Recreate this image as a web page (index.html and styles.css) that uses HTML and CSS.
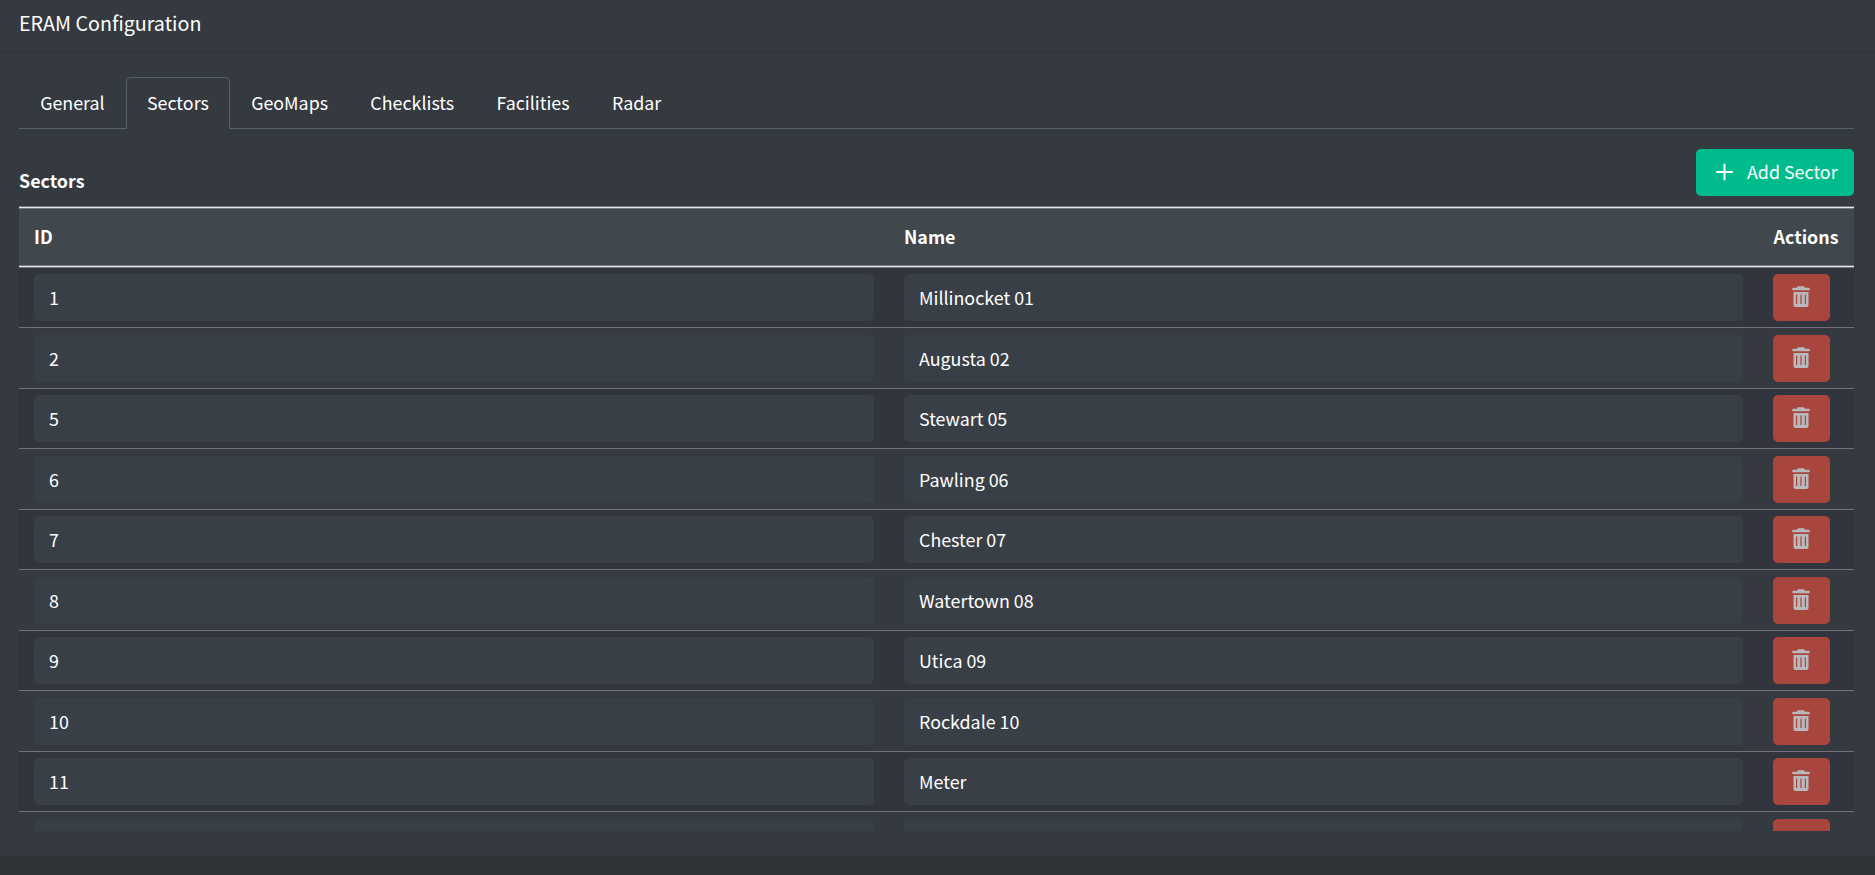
FILE: index.html
```html
<!DOCTYPE html>
<html lang="en">
<head>
<meta charset="utf-8">
<title>ERAM Configuration</title>
<link rel="stylesheet" href="styles.css">
</head>
<body>
<svg class="defs" aria-hidden="true">
  <symbol id="trash" viewBox="0 0 18 22">
    <path fill-rule="evenodd" d="M6 .3h6l1 1.400h4q.8 0 .8 1.300t-.8 1.300H1q-.8 0-.8-1.300t.8-1.300h4zM1.500 6h15v13q0 2-2 2h-11q-2 0-2-2zM4 8.500v9.500h1.200V8.500zM8.400 8.500v9.500h1.200V8.500zM12.800 8.500v9.500H14V8.500z"/>
  </symbol>
</svg>
<main class="window">
  <header class="window-header">ERAM Configuration</header>
  <section class="content">
    <nav class="tabs">
      <a class="tab">General</a>
      <a class="tab active">Sectors</a>
      <a class="tab">GeoMaps</a>
      <a class="tab">Checklists</a>
      <a class="tab">Facilities</a>
      <a class="tab">Radar</a>
    </nav>
    <div class="toolbar">
      <h2 class="title">Sectors</h2>
      <button class="add"><svg class="plus" viewBox="0 0 18 18"><path d="M9 1v16M1 9h16"/></svg><span class="add-label">Add Sector</span></button>
    </div>
    <div class="table">
      <div class="row head"><span>ID</span><span>Name</span><span class="actions">Actions</span></div>
      <div class="row"><span class="field">1</span><span class="field">Millinocket 01</span><button class="delete"><svg class="icon"><use href="#trash"/></svg></button></div>
      <div class="row"><span class="field">2</span><span class="field">Augusta 02</span><button class="delete"><svg class="icon"><use href="#trash"/></svg></button></div>
      <div class="row"><span class="field">5</span><span class="field">Stewart 05</span><button class="delete"><svg class="icon"><use href="#trash"/></svg></button></div>
      <div class="row"><span class="field">6</span><span class="field">Pawling 06</span><button class="delete"><svg class="icon"><use href="#trash"/></svg></button></div>
      <div class="row"><span class="field">7</span><span class="field">Chester 07</span><button class="delete"><svg class="icon"><use href="#trash"/></svg></button></div>
      <div class="row"><span class="field">8</span><span class="field">Watertown 08</span><button class="delete"><svg class="icon"><use href="#trash"/></svg></button></div>
      <div class="row"><span class="field">9</span><span class="field">Utica 09</span><button class="delete"><svg class="icon"><use href="#trash"/></svg></button></div>
      <div class="row"><span class="field">10</span><span class="field">Rockdale 10</span><button class="delete"><svg class="icon"><use href="#trash"/></svg></button></div>
      <div class="row"><span class="field">11</span><span class="field">Meter</span><button class="delete"><svg class="icon"><use href="#trash"/></svg></button></div>
      <div class="row"><span class="field"></span><span class="field"></span><button class="delete"></button></div>
    </div>
  </section>
  <footer class="footer"></footer>
</main>
</body>
</html>
```
FILE: styles.css
```css
*, *::after { box-sizing: border-box; }

body {
  margin: 0;
  background: #353940;
  color: #fff;
  font-family: "Noto Sans CJK SC", "Noto Sans", sans-serif;
  font-size: 17.85px;
  line-height: 28px;
}

button { font: inherit; color: inherit; border: 0; padding: 0; }

.defs { display: block; width: 0; height: 0; }

.window {
  display: flex;
  flex-direction: column;
  height: 875px;
  overflow: hidden;
}

.window-header {
  flex: none;
  height: 52px;
  padding: 9px 19px 0;
  border-bottom: 1px solid #2e3237;
  font-size: 19.7px;
}

.content {
  flex: none;
  height: 779px;
  padding: 25px 21px 0 19px;
  overflow: hidden;
}

.tabs {
  display: flex;
  height: 52px;
  border-bottom: 1px solid #56616a;
}

.tab {
  height: 52px;
  padding: 10px 20.150px 0;
  border: 1px solid transparent;
  border-bottom: 0;
}

.tab.active {
  background: #353940;
  border-color: #56616a;
  border-radius: 5px 5px 0 0;
}

.toolbar {
  display: flex;
  justify-content: space-between;
  height: 77px;
  padding-top: 20px;
}

.title { margin: 17px 0 0; font-size: inherit; font-weight: 700; }

.add {
  display: flex;
  align-items: center;
  gap: 14px;
  width: 158px;
  height: 47px;
  padding: 0 0 1px 20px;
  border-radius: 5px;
  background: #00bc8c;
}

.add-label { padding-bottom: 3px; white-space: nowrap; }

.plus { width: 17px; height: 18px; fill: none; stroke: #fff; stroke-width: 2; stroke-linecap: round; }

.row {
  display: grid;
  grid-template-columns: 840px 839px 57px;
  column-gap: 30px;
  height: 60.5px;
  padding: 6.5px 15px 0;
  border-bottom: 1px solid #6f737c;
}

.row:nth-child(even) { background: #32353d; }

.row.head {
  position: relative;
  height: 61.5px;
  padding-top: 16px;
  background: #40474d;
  border: 0;
  font-weight: 700;
  box-shadow: inset 0 1px #747a81, inset 0 2px #e4e6e9, inset 0 3px #747a81;
}

.row.head::after {
  content: "";
  position: absolute;
  left: 0;
  right: 0;
  top: 59px;
  height: 3px;
  border: solid #747a81;
  border-width: 1px 0;
  background: #e4e6e9;
}

.actions { padding-left: 0.5px; }

.field {
  height: 47px;
  padding: 9px 15px;
  border-radius: 5px;
  background: #393f46;
}

.delete {
  display: grid;
  place-items: center;
  height: 47px;
  padding: 0 0.5px 1px 0;
  border-radius: 5px;
  background: #a8453d;
}

.icon { width: 18px; height: 22px; fill: #b8b9bc; }

.footer { flex: none; margin-top: 25px; height: 19px; background: #303438; }
```
